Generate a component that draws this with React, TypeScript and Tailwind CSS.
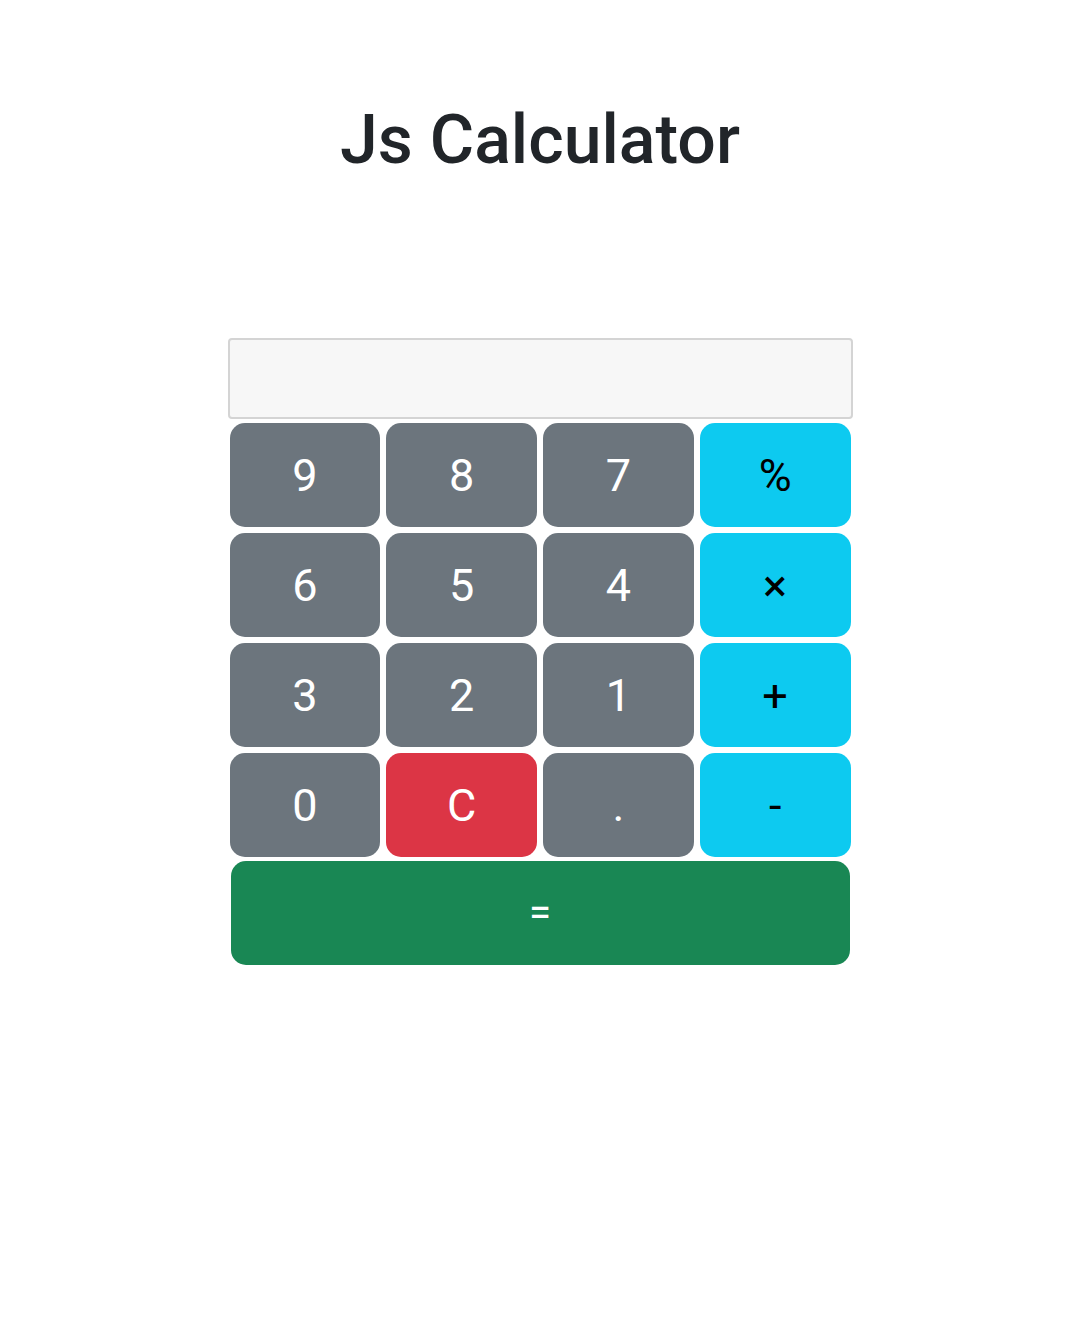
import React from 'react'

const keys: { label: string; kind: 'num' | 'op' | 'clear' }[] = [
  { label: '9', kind: 'num' },
  { label: '8', kind: 'num' },
  { label: '7', kind: 'num' },
  { label: '%', kind: 'op' },
  { label: '6', kind: 'num' },
  { label: '5', kind: 'num' },
  { label: '4', kind: 'num' },
  { label: '×', kind: 'op' },
  { label: '3', kind: 'num' },
  { label: '2', kind: 'num' },
  { label: '1', kind: 'num' },
  { label: '+', kind: 'op' },
  { label: '0', kind: 'num' },
  { label: 'C', kind: 'clear' },
  { label: '.', kind: 'num' },
  { label: '-', kind: 'op' },
]

const kindClass = {
  num: 'bg-[#6c757d] text-white',
  op: 'bg-[#0dcaf0] text-black',
  clear: 'bg-[#dc3545] text-white',
}

export default function App() {
  return (
    <div className="min-h-[1339px] bg-white font-['Roboto',sans-serif] text-[#212529]">
      <h1 className="pt-[98px] text-center text-[68px] font-medium leading-[84px]">Js Calculator</h1>

      <div className="mx-auto mt-[156px] w-[625px]">
        <input
          readOnly
          className="block h-[81px] w-full rounded-[4px] border-2 border-[#d4d4d4] bg-[#f7f7f7] px-3 text-[32px] outline-none"
        />
        <div className="mt-1 grid grid-cols-4 gap-[6px] px-[2px]">
          {keys.map(k => (
            <button
              key={k.label}
              className={`h-[104px] rounded-[15px] text-[45px] leading-none ${kindClass[k.kind]}`}
            >
              {k.label}
            </button>
          ))}
        </div>
        <button className="mx-[3px] mt-1 block h-[104px] w-[619px] rounded-[15px] bg-[#198754] text-[40px] leading-none text-white">
          =
        </button>
      </div>
    </div>
  )
}
